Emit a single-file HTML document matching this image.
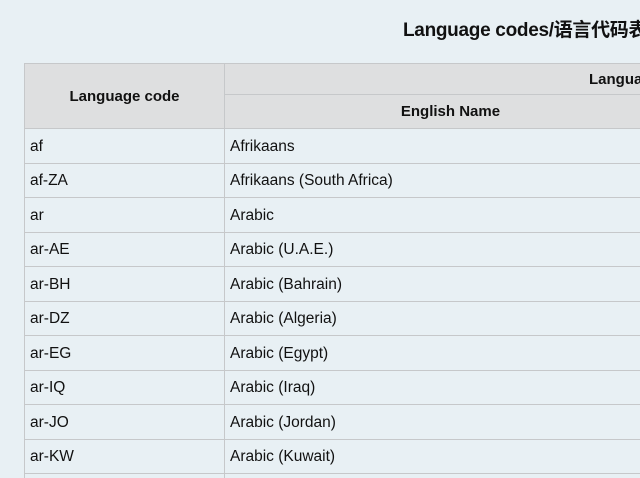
<!DOCTYPE html>
<html><head><meta charset="utf-8"><style>
html,body{margin:0;width:640px;height:478px;overflow:hidden}
body{background:#e8f0f4;font-family:"Liberation Sans","Noto Sans CJK SC",sans-serif;color:#111;position:relative}
#wrap{position:absolute;left:0;top:0;width:640px;height:478px;overflow:hidden}
h1{position:absolute;left:403px;top:15px;margin:0;font-size:19px;font-weight:bold;white-space:nowrap;letter-spacing:-0.3px}
table{position:absolute;left:24px;top:63px;border-collapse:collapse;width:900px;table-layout:fixed}
td,th{border:1px solid #c6c8ca;font-size:15.5px;padding:2px 0 0 5px;text-align:left;white-space:nowrap;overflow:hidden}
th{background:#dedfe0;font-weight:bold;text-align:center;padding:0;font-size:15px}
td{height:31.5px}
</style></head><body><div id="wrap">
<h1>Language codes/语言代码表</h1>
<table>
<colgroup><col style="width:200px"><col style="width:452px"><col style="width:248px"></colgroup>
<tr><th rowspan="2" style="height:64px">Language code</th><th colspan="2" style="height:30px;text-align:left;padding-left:364px">Language name</th></tr>
<tr><th style="height:33px">English Name</th><th>Native Name</th></tr>
<tr><td>af</td><td>Afrikaans</td><td></td></tr>
<tr><td>af-ZA</td><td>Afrikaans (South Africa)</td><td></td></tr>
<tr><td>ar</td><td>Arabic</td><td></td></tr>
<tr><td>ar-AE</td><td>Arabic (U.A.E.)</td><td></td></tr>
<tr><td>ar-BH</td><td>Arabic (Bahrain)</td><td></td></tr>
<tr><td>ar-DZ</td><td>Arabic (Algeria)</td><td></td></tr>
<tr><td>ar-EG</td><td>Arabic (Egypt)</td><td></td></tr>
<tr><td>ar-IQ</td><td>Arabic (Iraq)</td><td></td></tr>
<tr><td>ar-JO</td><td>Arabic (Jordan)</td><td></td></tr>
<tr><td>ar-KW</td><td>Arabic (Kuwait)</td><td></td></tr>
<tr><td>ar-LB</td><td>Arabic (Lebanon)</td><td></td></tr>
</table>
</div></body></html>
